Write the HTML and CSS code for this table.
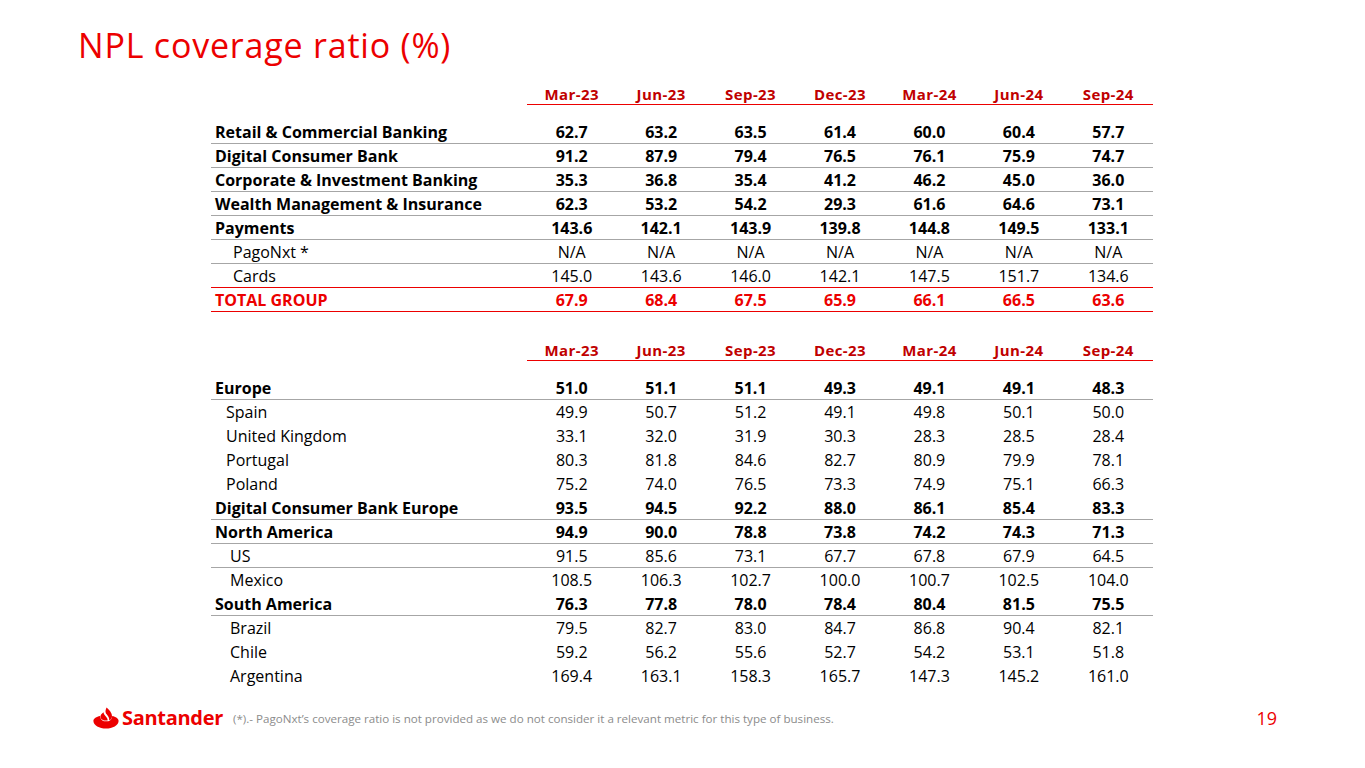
FILE: index.html
```html
<!DOCTYPE html>
<html lang="en">
<head>
<meta charset="utf-8">
<title>NPL coverage ratio (%)</title>
<link rel="stylesheet" href="styles.css">
</head>
<body>
<div class="slide">
  <h1 class="title">NPL coverage ratio (%)</h1>

  <section class="tbl tbl-seg">
    <div class="head">
      <span class="lbl"></span>
      <span class="m">Mar-23</span><span class="m">Jun-23</span><span class="m">Sep-23</span><span class="m">Dec-23</span><span class="m">Mar-24</span><span class="m">Jun-24</span><span class="m">Sep-24</span>
    </div>
    <div class="body">
      <div class="row bold line"><span class="lbl">Retail &amp; Commercial Banking</span><span>62.7</span><span>63.2</span><span>63.5</span><span>61.4</span><span>60.0</span><span>60.4</span><span>57.7</span></div>
      <div class="row bold line"><span class="lbl">Digital Consumer Bank</span><span>91.2</span><span>87.9</span><span>79.4</span><span>76.5</span><span>76.1</span><span>75.9</span><span>74.7</span></div>
      <div class="row bold line"><span class="lbl">Corporate &amp; Investment Banking</span><span>35.3</span><span>36.8</span><span>35.4</span><span>41.2</span><span>46.2</span><span>45.0</span><span>36.0</span></div>
      <div class="row bold line"><span class="lbl">Wealth Management &amp; Insurance</span><span>62.3</span><span>53.2</span><span>54.2</span><span>29.3</span><span>61.6</span><span>64.6</span><span>73.1</span></div>
      <div class="row bold line"><span class="lbl">Payments</span><span>143.6</span><span>142.1</span><span>143.9</span><span>139.8</span><span>144.8</span><span>149.5</span><span>133.1</span></div>
      <div class="row line"><span class="lbl sub-a">PagoNxt *</span><span>N/A</span><span>N/A</span><span>N/A</span><span>N/A</span><span>N/A</span><span>N/A</span><span>N/A</span></div>
      <div class="row redline"><span class="lbl sub-a">Cards</span><span>145.0</span><span>143.6</span><span>146.0</span><span>142.1</span><span>147.5</span><span>151.7</span><span>134.6</span></div>
      <div class="row bold total redline"><span class="lbl">TOTAL GROUP</span><span>67.9</span><span>68.4</span><span>67.5</span><span>65.9</span><span>66.1</span><span>66.5</span><span>63.6</span></div>
    </div>
  </section>

  <section class="tbl tbl-geo">
    <div class="head">
      <span class="lbl"></span>
      <span class="m">Mar-23</span><span class="m">Jun-23</span><span class="m">Sep-23</span><span class="m">Dec-23</span><span class="m">Mar-24</span><span class="m">Jun-24</span><span class="m">Sep-24</span>
    </div>
    <div class="body">
      <div class="row bold line"><span class="lbl">Europe</span><span>51.0</span><span>51.1</span><span>51.1</span><span>49.3</span><span>49.1</span><span>49.1</span><span>48.3</span></div>
      <div class="row"><span class="lbl sub-b">Spain</span><span>49.9</span><span>50.7</span><span>51.2</span><span>49.1</span><span>49.8</span><span>50.1</span><span>50.0</span></div>
      <div class="row"><span class="lbl sub-b">United Kingdom</span><span>33.1</span><span>32.0</span><span>31.9</span><span>30.3</span><span>28.3</span><span>28.5</span><span>28.4</span></div>
      <div class="row"><span class="lbl sub-b">Portugal</span><span>80.3</span><span>81.8</span><span>84.6</span><span>82.7</span><span>80.9</span><span>79.9</span><span>78.1</span></div>
      <div class="row"><span class="lbl sub-b">Poland</span><span>75.2</span><span>74.0</span><span>76.5</span><span>73.3</span><span>74.9</span><span>75.1</span><span>66.3</span></div>
      <div class="row bold line"><span class="lbl">Digital Consumer Bank Europe</span><span>93.5</span><span>94.5</span><span>92.2</span><span>88.0</span><span>86.1</span><span>85.4</span><span>83.3</span></div>
      <div class="row bold line"><span class="lbl">North America</span><span>94.9</span><span>90.0</span><span>78.8</span><span>73.8</span><span>74.2</span><span>74.3</span><span>71.3</span></div>
      <div class="row line"><span class="lbl sub-c">US</span><span>91.5</span><span>85.6</span><span>73.1</span><span>67.7</span><span>67.8</span><span>67.9</span><span>64.5</span></div>
      <div class="row"><span class="lbl sub-c">Mexico</span><span>108.5</span><span>106.3</span><span>102.7</span><span>100.0</span><span>100.7</span><span>102.5</span><span>104.0</span></div>
      <div class="row bold line"><span class="lbl">South America</span><span>76.3</span><span>77.8</span><span>78.0</span><span>78.4</span><span>80.4</span><span>81.5</span><span>75.5</span></div>
      <div class="row"><span class="lbl sub-c">Brazil</span><span>79.5</span><span>82.7</span><span>83.0</span><span>84.7</span><span>86.8</span><span>90.4</span><span>82.1</span></div>
      <div class="row"><span class="lbl sub-c">Chile</span><span>59.2</span><span>56.2</span><span>55.6</span><span>52.7</span><span>54.2</span><span>53.1</span><span>51.8</span></div>
      <div class="row"><span class="lbl sub-c">Argentina</span><span>169.4</span><span>163.1</span><span>158.3</span><span>165.7</span><span>147.3</span><span>145.2</span><span>161.0</span></div>
    </div>
  </section>

  <footer class="footer">
    <div class="brand">
      <svg class="flame" viewBox="0 0 26 22" width="26" height="22" aria-hidden="true">
        <path d="M13.6 0.6 C16.4 3.4 19 5.8 19 9.4 C19 11.4 17.8 12.6 16.2 13.2 C16.8 10.6 14.6 8.4 13 6.4 C12 5 12.6 2.6 13.6 0.6 Z" fill="#ec0000"/>
        <path d="M10.6 5.2 C10.2 8.2 15.2 10.2 14.6 13.4 L11 13.4 C8.8 13 7.4 11.6 7.4 9.8 C7.4 8 8.8 6.4 10.6 5.2 Z" fill="#ec0000"/>
        <path d="M0.4 14 C0.4 11.4 3.6 9.8 7 9.1 C7.1 11.6 8.6 13.6 11 14.2 L15.4 14.2 C17.8 13.6 19.2 11.6 19.2 9.1 C22.6 9.8 25.6 11.4 25.6 14 C25.6 18.4 19.6 21.6 13 21.6 C6.4 21.6 0.4 18.4 0.4 14 Z" fill="#ec0000"/>
      </svg>
      <span class="brand-name">Santander</span>
    </div>
    <p class="note">(*).- PagoNxt’s coverage ratio is not provided as we do not consider it a relevant metric for this type of business.</p>
    <span class="page">19</span>
  </footer>
</div>
</body>
</html>
```

FILE: styles.css
```css
* { box-sizing: border-box; }

html, body {
  margin: 0;
  padding: 0;
  background: #ffffff;
}

body {
  font-family: "Open Sans", "Noto Sans", "Liberation Sans", sans-serif;
  color: #000000;
}

.slide {
  width: 1365px;
  height: 768px;
  display: flex;
  flex-direction: column;
  overflow: hidden;
}

.title {
  margin: 0;
  padding: 25px 0 0 78px;
  font-size: 34px;
  line-height: 40px;
  font-weight: 400;
  color: #ec0000;
  letter-spacing: 0.8px;
}

.tbl {
  margin-left: 211px;
  width: 942px;
}

.tbl-seg { margin-top: 19px; }
.tbl-geo { margin-top: 28px; }

.head,
.row {
  display: grid;
  grid-template-columns: 316px repeat(7, 1fr);
}

.head {
  height: 20px;
  font-size: 15px;
  font-weight: 700;
  color: #c00000;
  letter-spacing: 0.4px;
}

.head .m {
  display: flex;
  align-items: center;
  justify-content: center;
  border-bottom: 1.5px solid #ec0000;
}

.body { margin-top: 16px; }

.row {
  height: 24px;
  align-items: center;
  font-size: 16px;
  line-height: 22px;
  border-bottom: 1px solid transparent;
}

.row > span { text-align: center; }
.row > .lbl { text-align: left; padding-left: 4px; white-space: nowrap; }

.row.bold { font-weight: 700; }
.row.line { border-bottom-color: #a6a6a6; }
.row.redline { border-bottom-color: #ec0000; }
.row.total { color: #ec0000; }

.lbl.sub-a { padding-left: 22px; }
.lbl.sub-b { padding-left: 15px; }
.lbl.sub-c { padding-left: 19px; }

.footer {
  margin-top: 14px;
  height: 32px;
  display: flex;
  align-items: center;
  padding-left: 93px;
  padding-right: 88px;
}

.brand {
  display: flex;
  align-items: center;
  width: 140px;
}

.flame { display: block; flex: none; }

.brand-name {
  margin-left: 3px;
  font-size: 20px;
  font-weight: 700;
  color: #ec0000;
  letter-spacing: -0.3px;
  line-height: 26px;
}

.note {
  margin: 2px 0 0 0;
  font-size: 11.6px;
  color: #8c8c8c;
  line-height: 14px;
}

.page {
  margin-left: auto;
  font-size: 18px;
  color: #ec0000;
  line-height: 22px;
}
```
